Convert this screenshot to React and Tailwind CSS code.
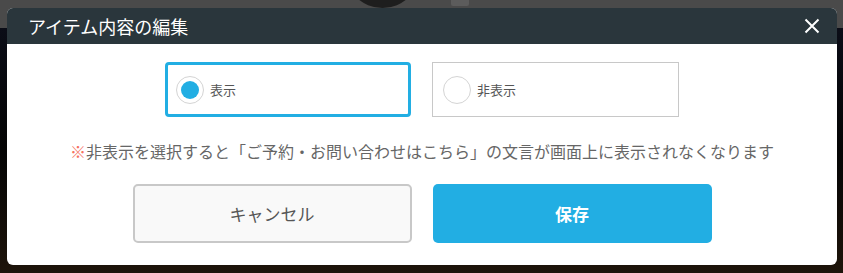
import React, { useState } from "react";

const FONT = {
  fontFamily: '"Noto Sans CJK JP", "Noto Sans", "Liberation Sans", sans-serif',
};

const RadioBox = ({ label, checked, onClick }) => (
  <button
    type="button"
    onClick={onClick}
    className={
      checked
        ? "flex items-center w-[246px] h-[55px] bg-white border-[3px] border-[#22aee3] rounded-[4px] pl-[8px]"
        : "flex items-center w-[247px] h-[55px] bg-white border border-[#c8c8c8] pl-[10px]"
    }
  >
    <span className="flex items-center justify-center w-[28px] h-[28px] rounded-full border border-[#d4d4d4] bg-white">
      {checked && <span className="w-[18px] h-[18px] rounded-full bg-[#22aee3]" />}
    </span>
    <span className="ml-[6px] text-[13px] text-[#555555]">{label}</span>
  </button>
);

const App = () => {
  const [visible, setVisible] = useState(true);

  return (
    <div className="relative w-[843px] h-[273px] overflow-hidden" style={FONT}>
      {/* page behind the overlay */}
      <div className="flex flex-col w-full h-full">
        <div className="relative h-[28px] bg-[#4a4a4a] overflow-hidden">
          <div className="absolute left-[345px] -top-[30px] w-[75px] h-[38px] rounded-b-full bg-[#1e1e1e]" />
          <div className="absolute left-[451px] -top-[4px] w-[18px] h-[10px] rounded-[2px] bg-[#5c5c5c]" />
        </div>
        <div className="flex-1 bg-gradient-to-b from-[#0b0d17] via-[#050505] to-[#1e140a]" />
      </div>

      {/* modal */}
      <div className="absolute left-[7px] top-[8px] w-[830px] h-[257px] flex flex-col bg-white rounded-[6px] overflow-hidden">
        <div className="flex items-center justify-between h-[36px] bg-[#2a363c] pl-[21px] pr-[17px]">
          <h2 className="text-[18px] text-white leading-none">アイテム内容の編集</h2>
          <button type="button" className="text-white">
            <svg width="16" height="16" viewBox="0 0 16 16" fill="none">
              <path d="M1.5 1.5L14.5 14.5M14.5 1.5L1.5 14.5" stroke="white" strokeWidth="2" />
            </svg>
          </button>
        </div>

        <div className="flex flex-col items-center pt-[18px]">
          <div className="flex gap-[21px]">
            <RadioBox label="表示" checked={visible} onClick={() => setVisible(true)} />
            <RadioBox label="非表示" checked={!visible} onClick={() => setVisible(false)} />
          </div>

          <p className="mt-[23px] text-[16px] leading-[22px] text-[#666666]">
            <span className="text-[#f6735f]">※</span>
            非表示を選択すると「ご予約・お問い合わせはこちら」の文言が画面上に表示されなくなります
          </p>

          <div className="flex gap-[21px] mt-[22px]">
            <button
              type="button"
              className="w-[279px] h-[59px] bg-[#f9f9f9] border-2 border-[#c8c8c8] rounded-[5px] text-[17px] text-[#555555]"
            >
              キャンセル
            </button>
            <button
              type="button"
              className="w-[279px] h-[59px] bg-[#22aee3] rounded-[5px] text-[17px] font-bold text-white"
            >
              保存
            </button>
          </div>
        </div>
      </div>
    </div>
  );
};

export default App;
